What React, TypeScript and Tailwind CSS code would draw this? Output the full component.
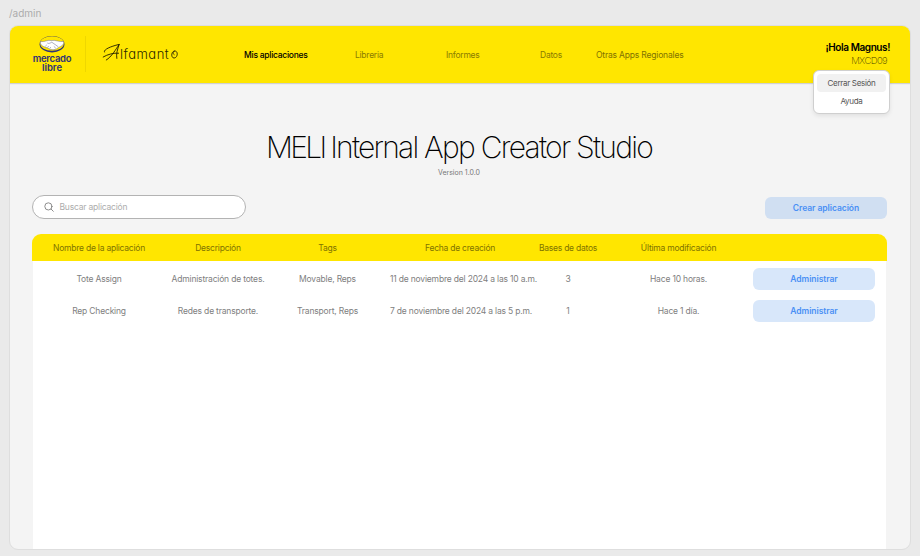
import React from "react";

const navItems = [
  { label: "Mis aplicaciones", cls: "w-[64px] mr-[47px] text-black font-medium tracking-[-0.26px]" },
  { label: "Libreria", cls: "w-[28px] mr-[63px] text-[#8a7c00] tracking-[-0.25px]" },
  { label: "Informes", cls: "w-[34px] mr-[60px] text-[#8a7c00] tracking-[-0.25px]" },
  { label: "Datos", cls: "w-[24px] mr-[32px] text-[#8a7c00] tracking-[-0.25px]" },
  { label: "Otras Apps Regionales", cls: "w-[88px] text-[#807300] tracking-[-0.18px]" },
];

const headers = [
  "Nombre de la aplicación",
  "Descripción",
  "Tags",
  "Fecha de creación",
  "Bases de datos",
  "Última modificación",
];

const rows = [
  {
    name: "Tote Assign",
    description: "Administración de totes.",
    tags: "Movable, Reps",
    created: "11 de noviembre del 2024 a las 10 a.m.",
    databases: "3",
    modified: "Hace 10 horas.",
  },
  {
    name: "Rep Checking",
    description: "Redes de transporte.",
    tags: "Transport, Reps",
    created: "7 de noviembre del 2024 a las 5 p.m.",
    databases: "1",
    modified: "Hace 1 día.",
  },
];

const columns = "grid grid-cols-[132px_106px_113px_152px_64px_157px_130px] items-center text-center whitespace-nowrap";

function MercadoLibreLogo() {
  return (
    <div className="flex w-[44px] shrink-0 flex-col items-center font-['Inter',sans-serif] text-[9.5px] font-semibold leading-[9px] text-[#2d3277]">
      <svg className="h-[18px] w-[26px]" viewBox="0 0 26 18">
        <ellipse cx="13" cy="9.2" rx="12.4" ry="8.3" fill="#2d3277" />
        <ellipse cx="13" cy="8.5" rx="11.8" ry="7.3" fill="#ffe600" />
        <path d="M1.5 6.6 C6 7.2 9 4.4 12.2 5.6 C16.5 4.4 20 7.4 24.5 6.4 C25.4 9.4 22.6 11.3 19.6 12.2 C17 15.2 12 15.6 9 13 C5 11.9 .6 10.6 1.5 6.6Z" fill="#fff" stroke="#6b6d92" strokeWidth=".5" />
        <path d="M8.3 8 C9.8 9 11.4 8 12.8 7.2 L19 11.6 M6.3 11.2 L7.8 9.9 M8.3 12.5 L9.8 11 M10.8 13.5 L11.8 12 M14.8 11.4 L16.8 13.2" fill="none" stroke="#6b6d92" strokeWidth=".55" />
      </svg>
      <span className="mt-px tracking-[-0.3px]">mercado</span>
      <span className="leading-[10px]">libre</span>
    </div>
  );
}

function AlfamantoLogo() {
  return (
    <div className="flex h-[22px] w-[78px] shrink-0 items-start text-[#2b2700]">
      <svg className="h-[22px] w-[18px] shrink-0" viewBox="0 0 18 22" fill="none" stroke="currentColor" strokeWidth=".95" strokeLinecap="round">
        <path d="M2.4 10 C1.2 8 7 4.8 17.2 2.4 C14 7 9.5 15 4.3 18 M17.2 2.4 C15.4 7.4 14 12 14.8 16.4 M1.2 15 C6 12.2 11.5 10.8 16.6 11.2" />
      </svg>
      <span className="w-[51px] whitespace-nowrap font-['Inter',sans-serif] text-[13px] font-light leading-[24px] tracking-[0.5px] [font-feature-settings:'cv11']">lfamant</span>
      <svg className="mt-[8px] h-[10px] w-[7px] shrink-0" viewBox="0 0 7 10" fill="none" stroke="currentColor" strokeWidth=".9">
        <path d="M3.8 1 C0 1.2 -.2 8 3 8 C6.8 8 7.4 1.2 4 1 C1.8 1.2 1.6 4 3.4 4.8" />
      </svg>
    </div>
  );
}

export default function App() {
  return (
    <div className="flex h-[556px] w-[920px] flex-col overflow-hidden bg-[#eaeaea] pl-[9px] font-['Inter',sans-serif] text-[8.5px] leading-[12px]">
      <div className="h-[25px] shrink-0 pt-[7px] text-[10px] leading-[13px] text-[#acacac]">/admin</div>
      <div className="flex h-[525px] w-[902px] shrink-0 flex-col overflow-hidden rounded-[9px] border border-[#dedede] bg-[#f4f4f4]">
        <header className="relative flex h-[57px] w-full shrink-0 bg-[#ffe600] shadow-[0_1px_1px_rgba(0,0,0,0.14)]">
          <div className="flex pl-[20px] pt-[9px]">
            <MercadoLibreLogo />
          </div>
          <div className="ml-[11px] mt-[10px] h-[36px] w-px bg-[#efd700]" />
          <div className="ml-[16px] mt-[16px]">
            <AlfamantoLogo />
          </div>
          <nav className="ml-[64px] flex h-full items-center">
            {navItems.map((item) => (
              <a key={item.label} className={`whitespace-nowrap ${item.cls}`}>{item.label}</a>
            ))}
          </nav>
          <div className="ml-auto mr-[20px] pt-[15px] text-right">
            <div className="text-[10px] font-semibold leading-[13px] tracking-[-0.4px] text-black">¡Hola Magnus!</div>
            <div className="pr-[3px] text-[9.5px] font-extralight leading-[13px] tracking-[-0.6px] text-[#403900]">MXCD09</div>
          </div>
          <div className="absolute right-[20px] top-[44px] z-10 h-[44px] w-[77px] rounded-[6px] border border-[#cfcfcf] bg-white p-[3px] text-center text-[8px] tracking-[-0.3px] text-[#555] shadow-[0_2px_4px_rgba(0,0,0,0.08)]">
            <div className="h-[18px] rounded-[4px] bg-[#f1f1f1] leading-[18px]">Cerrar Sesión</div>
            <div className="h-[19px] leading-[19px]">Ayuda</div>
          </div>
        </header>

        <main className="flex flex-1 flex-col pl-[22px] pr-[23px]">
          <div className="ml-[-1px] pt-[45px] text-center">
            <h1 className="text-[30px] font-extralight leading-[38px] tracking-[-1.75px] text-black">
              <span className="tracking-[-2.7px]">MELI </span>Internal App Creator Studio
            </h1>
            <p className="mt-[2px] text-[7px] leading-[10px] text-[#777]">Version 1.0.0</p>
          </div>
          <div className="mt-[17px] flex h-[24px] items-center justify-between">
            <div className="flex h-[24px] w-[214px] items-center rounded-full border border-[#b3b3b3] bg-white pl-[11px] tracking-[-0.2px] text-[#adadad]">
              <svg className="mr-[5.5px] h-[10px] w-[10px]" viewBox="0 0 10 10" fill="none" stroke="#808080" strokeWidth=".9" strokeLinecap="round">
                <circle cx="4.4" cy="4.4" r="3.6" />
                <path d="M7.1 7.1 L9.3 9.3" />
              </svg>
              <span>Buscar aplicación</span>
            </div>
            <button className="mt-px h-[22px] w-[122px] rounded-[6px] bg-[#d0dff2] text-[8.5px] font-semibold tracking-[-0.05px] text-[#4a90f5]">Crear aplicación</button>
          </div>
          <section className="mt-[15px] flex flex-1 flex-col">
            <div className={`${columns} h-[27px] rounded-t-[9px] bg-[#ffe600] pl-px tracking-[-0.23px] text-[#807300]`}>
              {headers.map((header) => <div key={header}>{header}</div>)}
            </div>
            <div className="mx-px flex-1 bg-white pt-[2px] text-[#808080]">
              {rows.map((row) => (
                <div key={row.name} className={`${columns} h-[32px] tracking-[-0.18px]`}>
                  <div>{row.name}</div>
                  <div>{row.description}</div>
                  <div>{row.tags}</div>
                  <div className="pl-[6px] text-left">{row.created}</div>
                  <div>{row.databases}</div>
                  <div>{row.modified}</div>
                  <button className="ml-[-4px] h-[22px] w-[122px] rounded-[6px] bg-[#d8e7fa] text-[8.5px] font-semibold tracking-[-0.05px] text-[#4a90f5]">Administrar</button>
                </div>
              ))}
            </div>
          </section>
        </main>
      </div>
    </div>
  );
}
